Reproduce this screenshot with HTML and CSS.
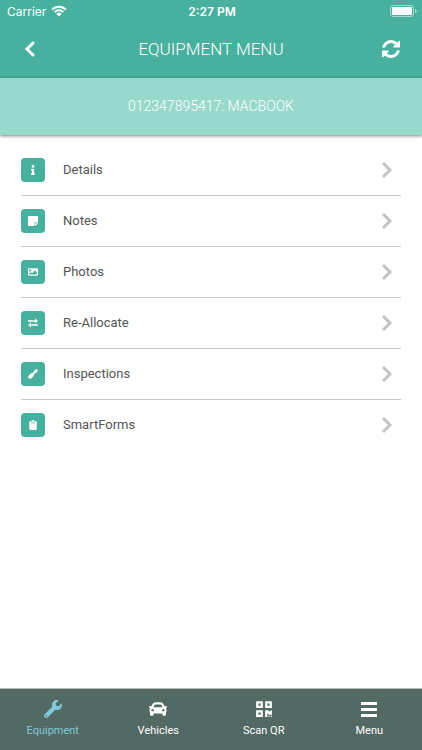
FILE: index.html
```html
<!DOCTYPE html>
<html lang="en">
<head>
<meta charset="UTF-8" />
<meta name="viewport" content="width=device-width, initial-scale=1" />
<title>Equipment Menu</title>
<link rel="stylesheet" href="styles.css">
</head>
<body>

<header class="top">
  <div class="status">
    <div class="carrier">
      <span>Carrier</span>
      <svg width="16" height="12" viewBox="0 0 16 12" fill="none" stroke="#fff" stroke-width="2">
        <path d="M1.2 4.600a9.600 9.600 0 0 1 13.600 0M3.700 7.100a6.100 6.100 0 0 1 8.600 0" />
        <path d="M8 11.500L5.400 8.900a3.700 3.700 0 0 1 5.200 0z" fill="#fff" stroke="none" />
      </svg>
    </div>
    <span class="clock">2:27 PM</span>
    <svg class="battery" width="27" height="12" viewBox="0 0 27 12">
      <rect x=".5" y=".5" width="23" height="11" rx="2.5" fill="none" stroke="#fff" stroke-opacity=".5" />
      <rect x="2" y="2" width="20" height="8" rx="1" fill="#fff" />
      <path d="M25 4v4c1-.3 1.600-1.100 1.600-2S26 4.300 25 4z" fill="#fff" fill-opacity=".5" />
    </svg>
  </div>
  <div class="title-bar">
    <button class="icon-btn" aria-label="Back">
      <svg width="18" height="18" viewBox="0 0 18 18" fill="none" stroke="#fff" stroke-width="3" stroke-linecap="round"><path d="M11 3L5 9l6 6" /></svg>
    </button>
    <h1>EQUIPMENT MENU</h1>
    <button class="icon-btn" aria-label="Refresh">
      <svg width="18" height="18" viewBox="0 128 1536 1536" fill="#fff"><path d="M1511 1056q0 5-1 7-64 268-268 434.500t-478 166.500q-146 0-282.500-55t-243.500-157l-129 129q-19 19-45 19t-45-19-19-45v-448q0-26 19-45t45-19h448q26 0 45 19t19 45-19 45l-137 137q71 66 161 102t187 36q134 0 250-65t186-179q11-17 53-117 8-23 30-23h192q13 0 22.500 9.500t9.500 22.500zm25-800v448q0 26-19 45t-45 19h-448q-26 0-45-19t-19-45 19-45l138-138q-148-137-349-137-134 0-250 65t-186 179q-11 17-53 117-8 23-30 23h-199q-13 0-22.500-9.500t-9.500-22.500v-7q65-268 270-434.500t480-166.500q146 0 284 55.500t245 156.500l130-129q19-19 45-19t45 19 19 45z" /></svg>
    </button>
  </div>
</header>

<div class="asset">012347895417: MACBOOK</div>

<main class="list">
  <a class="row" href="#details">
    <span class="badge"><svg width="10" height="10" viewBox="-160 0 512 512"><path d="M20 424.229h20V279.771H20c-11.046 0-20-8.954-20-20V212c0-11.046 8.954-20 20-20h112c11.046 0 20 8.954 20 20v212.229h20c11.046 0 20 8.954 20 20V492c0 11.046-8.954 20-20 20H20c-11.046 0-20-8.954-20-20v-47.771c0-11.046 8.954-20 20-20zM96 0C56.235 0 24 32.235 24 72s32.235 72 72 72 72-32.235 72-72S135.764 0 96 0z" /></svg></span>
    <span class="label">Details</span>
    <svg class="chevron" viewBox="0 0 12 18"><path d="M2 2l7 7-7 7" /></svg>
  </a>
  <a class="row" href="#notes">
    <span class="badge"><svg width="10" height="10" viewBox="0 32 448 448"><path d="M312 320h136V56c0-13.300-10.700-24-24-24H24C10.700 32 0 42.700 0 56v400c0 13.300 10.700 24 24 24h264V344c0-13.200 10.800-24 24-24zm129 55l-98 98c-4.500 4.500-10.600 7-17 7h-6V352h128v6.100c0 6.300-2.500 12.400-7 16.900z" /></svg></span>
    <span class="label">Notes</span>
    <svg class="chevron" viewBox="0 0 12 18"><path d="M2 2l7 7-7 7" /></svg>
  </a>
  <a class="row" href="#photos">
    <span class="badge"><svg width="10" height="10" viewBox="0 0 512 512"><path d="M464 448H48c-26.510 0-48-21.490-48-48V112c0-26.510 21.490-48 48-48h416c26.510 0 48 21.490 48 48v288c0 26.510-21.490 48-48 48zM112 120c-30.928 0-56 25.072-56 56s25.072 56 56 56 56-25.072 56-56-25.072-56-56-56zM64 384h384V272l-87.515-87.515c-4.686-4.686-12.284-4.686-16.971 0L208 320l-55.515-55.515c-4.686-4.686-12.284-4.686-16.971 0L64 336v48z" /></svg></span>
    <span class="label">Photos</span>
    <svg class="chevron" viewBox="0 0 12 18"><path d="M2 2l7 7-7 7" /></svg>
  </a>
  <a class="row" href="#re-allocate">
    <span class="badge"><svg width="10" height="10" viewBox="0 0 10 10"><path d="M0 2.200h7V.5L10 3 7 5.400V3.700H0zM10 7.700H3v1.700L0 7l3-2.400v1.700h7z" /></svg></span>
    <span class="label">Re-Allocate</span>
    <svg class="chevron" viewBox="0 0 12 18"><path d="M2 2l7 7-7 7" /></svg>
  </a>
  <a class="row" href="#inspections">
    <span class="badge"><svg width="10" height="10" viewBox="0 0 10 10"><path d="M8.400 0L10 1.600 8.700 3.700 7.400 4 5.700 5.700l.1.700q0 .5-.4.900L3 9.600q-1.100.8-2.200-.4-1.200-1.100-.4-2.200l2.300-2.400q.4-.4.900-.4l.7.100L6 2.600l.3-1.300z" /></svg></span>
    <span class="label">Inspections</span>
    <svg class="chevron" viewBox="0 0 12 18"><path d="M2 2l7 7-7 7" /></svg>
  </a>
  <a class="row" href="#smartforms">
    <span class="badge"><svg width="10" height="10" viewBox="-64 0 512 512"><path d="M384 112v352c0 26.510-21.490 48-48 48H48c-26.510 0-48-21.490-48-48V112c0-26.510 21.490-48 48-48h80c0-35.290 28.710-64 64-64s64 28.710 64 64h80c26.510 0 48 21.490 48 48zM192 40c-13.255 0-24 10.745-24 24s10.745 24 24 24 24-10.745 24-24-10.745-24-24-24m96 114v-20a6 6 0 0 0-6-6H102a6 6 0 0 0-6 6v20a6 6 0 0 0 6 6h180a6 6 0 0 0 6-6z" /></svg></span>
    <span class="label">SmartForms</span>
    <svg class="chevron" viewBox="0 0 12 18"><path d="M2 2l7 7-7 7" /></svg>
  </a>
</main>

<nav class="tabs">
  <a class="tab active" href="#equipment">
    <svg width="18" height="18" viewBox="0 0 512 512"><path d="M507.730 109.100c-2.240-9.030-13.540-12.090-20.120-5.510l-74.360 74.360-67.880-11.310-11.310-67.880 74.360-74.360c6.620-6.620 3.430-17.900-5.660-20.160-47.380-11.740-99.550.91-136.580 37.930-39.640 39.640-50.550 97.100-34.050 147.200L18.740 402.760c-24.990 24.990-24.990 65.510 0 90.500 24.990 24.990 65.510 24.990 90.500 0l213.210-213.210c50.120 16.710 107.470 5.680 147.370-34.220 37.070-37.070 49.700-89.320 37.910-136.730zM64 472c-13.250 0-24-10.750-24-24 0-13.260 10.750-24 24-24s24 10.740 24 24c0 13.250-10.750 24-24 24z" /></svg>
    Equipment
  </a>
  <a class="tab" href="#vehicles">
    <svg width="18" height="18" viewBox="0 0 512 512"><path d="M499.990 176h-59.870l-16.640-41.600C406.380 91.630 365.570 64 319.500 64h-127c-46.060 0-86.880 27.630-103.990 70.400L71.870 176H12.010C4.200 176-1.530 183.340.37 190.910l6 24C7.700 220.250 12.500 224 18.010 224h20.070C24.650 235.730 16 252.780 16 272v48c0 16.120 6.160 30.670 16 41.930V416c0 17.670 14.330 32 32 32h32c17.670 0 32-14.330 32-32v-32h256v32c0 17.670 14.330 32 32 32h32c17.670 0 32-14.330 32-32v-54.070c9.840-11.250 16-25.800 16-41.930v-48c0-19.220-8.650-36.270-22.070-48H494c5.510 0 10.310-3.750 11.640-9.090l6-24c1.890-7.570-3.840-14.910-11.650-14.910zm-352.060-17.830c7.290-18.220 24.940-30.170 44.570-30.170h127c19.630 0 37.280 11.950 44.570 30.170L384 208H128l19.930-49.830zM96 319.800c-19.200 0-32-12.760-32-31.900S76.800 256 96 256s48 28.710 48 47.850-28.800 15.950-48 15.950zm320 0c-19.200 0-48 3.190-48-15.950S396.800 256 416 256s32 12.760 32 31.900-12.800 31.900-32 31.900z" /></svg>
    Vehicles
  </a>
  <a class="tab" href="#scan">
    <svg width="18" height="18" viewBox="-32 0 512 512"><path d="M0 224h192V32H0v192zM64 96h64v64H64V96zm192-64v192h192V32H256zm128 128h-64V96h64v64zM0 480h192V288H0v192zm64-128h64v64H64v-64zm352-64h32v128h-96v-32h-32v96h-64V288h96v32h64v-32zm0 160h32v32h-32v-32zm-64 0h32v32h-32v-32z" /></svg>
    Scan QR
  </a>
  <a class="tab" href="#menu">
    <svg width="18" height="18" viewBox="0 0 18 18"><path d="M1 2h16v3H1zM1 8h16v3H1zM1 14h16v3H1z" /></svg>
    Menu
  </a>
</nav>

</body>
</html>
```
FILE: styles.css
```css
* {
  box-sizing: border-box;
}
body {
  margin: 0;
  min-height: 100vh;
  display: flex;
  flex-direction: column;
  background: #fff;
  color: #555;
  font-family: Roboto, sans-serif;
  font-size: 13px;
}
a {
  color: inherit;
  text-decoration: none;
}
.top {
  background: #47b09e;
  color: #fff;
}
.status {
  display: grid;
  grid-template-columns: 1fr auto 1fr;
  align-items: center;
  height: 22px;
  padding: 0 5px 0 7px;
  font-family: Inter, sans-serif;
  font-size: 12px;
}
.carrier {
  display: flex;
  align-items: center;
  gap: 5px;
}
.clock {
  font-weight: 600;
}
.battery {
  justify-self: end;
}
.title-bar {
  display: flex;
  align-items: center;
  justify-content: space-between;
  height: 54px;
  margin-bottom: 2px;
  padding: 0 16px;
}
.top {
  display: flow-root;
}
h1 {
  margin: 0;
  font-size: 17px;
  font-weight: 300;
}
.icon-btn {
  display: flex;
  padding: 6px;
  border: none;
  background: none;
  cursor: pointer;
}
.asset {
  padding: 18px 16px;
  background: #99d9cd;
  box-shadow: 0 1px 3px rgba(0,0,0,0.5);
  color: #fff;
  font-size: 14px;
  font-weight: 300;
  line-height: 21px;
  text-align: center;
}
.list {
  flex: 1;
  padding: 10px 21px;
}
.row {
  display: flex;
  align-items: center;
  height: 51px;
  border-bottom: 1px solid #ccc;
}
.row:last-child {
  border-color: transparent;
}
.badge {
  display: flex;
  align-items: center;
  justify-content: center;
  width: 24px;
  height: 24px;
  margin-right: 18px;
  border-radius: 4px;
  background: #47b09e;
  fill: #fff;
}
.label {
  flex: 1;
  padding-bottom: 1px;
}
.chevron {
  width: 12px;
  height: 18px;
  margin-right: 8px;
  fill: none;
  stroke: #c4c4c4;
  stroke-width: 3;
}
.tabs {
  display: grid;
  grid-template-columns: repeat(4, 1fr);
  height: 62px;
  border-top: 1px solid #b4bcba;
  background: #536964;
}
.tab {
  display: flex;
  flex-direction: column;
  align-items: center;
  gap: 6px;
  padding-top: 11px;
  color: #fff;
  fill: currentColor;
  font-size: 11px;
  line-height: 14px;
}
.tab.active {
  color: #7fc9db;
}
```
